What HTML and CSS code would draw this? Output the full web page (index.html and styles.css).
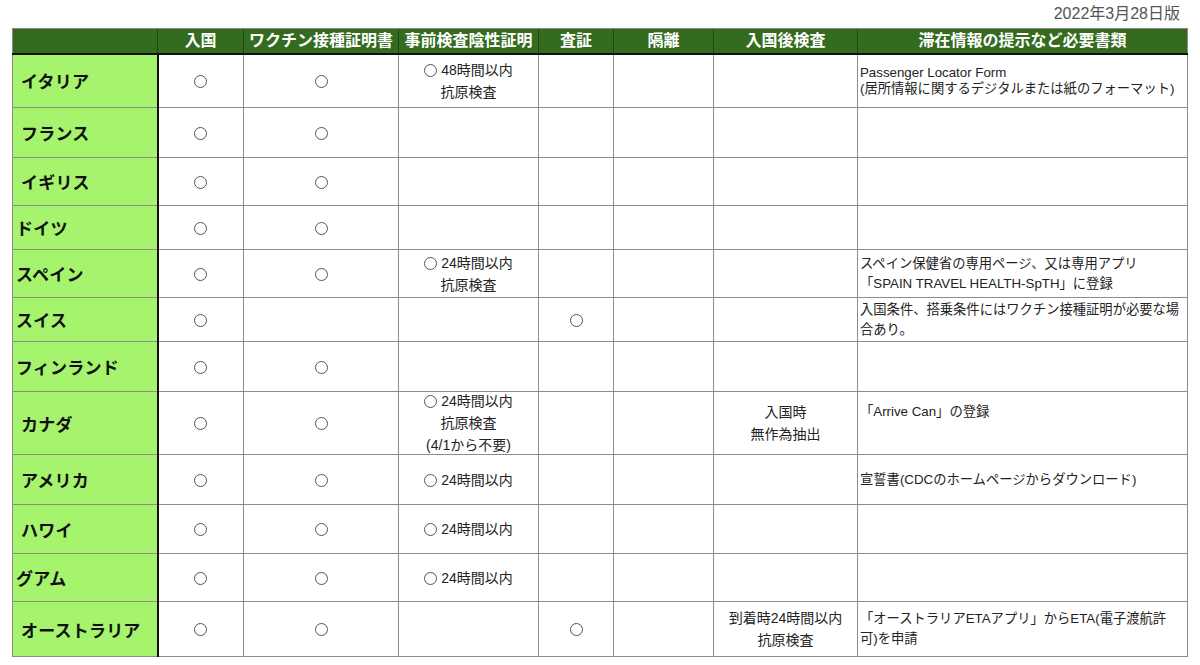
FILE: index.html
```html
<!DOCTYPE html>
<html lang="ja">
<head>
<meta charset="utf-8">
<title>入国条件一覧</title>
<link rel="stylesheet" href="styles.css">
</head>
<body>
<div class="page">
  <div class="date">2022年3月28日版</div>
  <table class="grid">
    <colgroup>
      <col class="c-country"><col class="c-entry"><col class="c-vax"><col class="c-test"><col class="c-visa"><col class="c-quar"><col class="c-post"><col class="c-notes">
    </colgroup>
    <thead>
      <tr class="head">
        <th></th><th>入国</th><th>ワクチン接種証明書</th><th>事前検査陰性証明</th><th>査証</th><th>隔離</th><th>入国後検査</th><th>滞在情報の提示など必要書類</th>
      </tr>
    </thead>
    <tbody>
      <tr class="h54">
        <th class="country">イタリア</th>
        <td><span class="mark"></span></td>
        <td><span class="mark"></span></td>
        <td><span class="mark"></span> 48時間以内<br>抗原検査</td>
        <td></td><td></td><td></td>
        <td class="notes tight">Passenger Locator Form<br>(居所情報に関するデジタルまたは紙のフォーマット)</td>
      </tr>
      <tr class="h50">
        <th class="country">フランス</th>
        <td><span class="mark"></span></td>
        <td><span class="mark"></span></td>
        <td></td><td></td><td></td><td></td><td class="notes"></td>
      </tr>
      <tr class="h48">
        <th class="country">イギリス</th>
        <td><span class="mark"></span></td>
        <td><span class="mark"></span></td>
        <td></td><td></td><td></td><td></td><td class="notes"></td>
      </tr>
      <tr class="h44">
        <th class="country near">ドイツ</th>
        <td><span class="mark"></span></td>
        <td><span class="mark"></span></td>
        <td></td><td></td><td></td><td></td><td class="notes"></td>
      </tr>
      <tr class="h48">
        <th class="country near">スペイン</th>
        <td><span class="mark"></span></td>
        <td><span class="mark"></span></td>
        <td><span class="mark"></span> 24時間以内<br>抗原検査</td>
        <td></td><td></td><td></td>
        <td class="notes">スペイン保健省の専用ページ、又は専用アプリ<br>「SPAIN TRAVEL HEALTH-SpTH」に登録</td>
      </tr>
      <tr class="h44">
        <th class="country near">スイス</th>
        <td><span class="mark"></span></td>
        <td></td>
        <td></td>
        <td><span class="mark"></span></td>
        <td></td><td></td>
        <td class="notes">入国条件、搭乗条件にはワクチン接種証明が必要な場合あり。</td>
      </tr>
      <tr class="h50">
        <th class="country near">フィンランド</th>
        <td><span class="mark"></span></td>
        <td><span class="mark"></span></td>
        <td></td><td></td><td></td><td></td><td class="notes"></td>
      </tr>
      <tr class="h63">
        <th class="country">カナダ</th>
        <td><span class="mark"></span></td>
        <td><span class="mark"></span></td>
        <td><span class="stack"><span class="mark"></span> 24時間以内<br>抗原検査<br>(4/1から不要)</span></td>
        <td></td><td></td>
        <td>入国時<br>無作為抽出</td>
        <td class="notes top">「Arrive Can」の登録</td>
      </tr>
      <tr class="h50">
        <th class="country">アメリカ</th>
        <td><span class="mark"></span></td>
        <td><span class="mark"></span></td>
        <td><span class="mark"></span> 24時間以内</td>
        <td></td><td></td><td></td>
        <td class="notes">宣誓書(CDCのホームページからダウンロード)</td>
      </tr>
      <tr class="h49">
        <th class="country">ハワイ</th>
        <td><span class="mark"></span></td>
        <td><span class="mark"></span></td>
        <td><span class="mark"></span> 24時間以内</td>
        <td></td><td></td><td></td><td class="notes"></td>
      </tr>
      <tr class="h48">
        <th class="country near">グアム</th>
        <td><span class="mark"></span></td>
        <td><span class="mark"></span></td>
        <td><span class="mark"></span> 24時間以内</td>
        <td></td><td></td><td></td><td class="notes"></td>
      </tr>
      <tr class="h55">
        <th class="country">オーストラリア</th>
        <td><span class="mark"></span></td>
        <td><span class="mark"></span></td>
        <td></td>
        <td><span class="mark"></span></td>
        <td></td>
        <td>到着時24時間以内<br>抗原検査</td>
        <td class="notes">「オーストラリアETAアプリ」からETA(電子渡航許<br>可)を申請</td>
      </tr>
    </tbody>
  </table>
</div>
</body>
</html>
```

FILE: styles.css
```css
* { box-sizing: border-box; }

html, body {
  margin: 0;
  padding: 0;
  background: #ffffff;
}

body {
  font-family: "Liberation Sans", "Noto Sans CJK JP", sans-serif;
  color: #222;
}

.page {
  width: 1200px;
  padding: 0 13px 0 12px;
}

.date {
  height: 28px;
  line-height: 28px;
  font-size: 16px;
  color: #555;
  text-align: right;
  padding-right: 7px;
}

.grid {
  width: 1175px;
  table-layout: fixed;
  border-collapse: collapse;
  border: 1px solid #8a8a8a;
}

.c-country { width: 145px; }
.c-entry { width: 86px; }
.c-vax { width: 155px; }
.c-test { width: 140px; }
.c-visa { width: 75px; }
.c-quar { width: 100px; }
.c-post { width: 144px; }
.c-notes { width: 330px; }

.head {
  height: 25px;
  background: #336b1f;
}

.head th {
  padding: 0;
  font-size: 16px;
  line-height: 22px;
  font-weight: bold;
  color: #ffffff;
  text-align: center;
  white-space: nowrap;
  border-left: 1px solid #1e4812;
  border-top: 1px solid #8a8a8a;
  border-bottom: 2px solid #111;
}

.head th:first-child {
  border-left: 1px solid #8a8a8a;
}

.h44 { height: 44px; }
.h48 { height: 48px; }
.h49 { height: 49px; }
.h50 { height: 50px; }
.h54 { height: 54px; }
.h55 { height: 55px; }
.h63 { height: 63px; }

td, .country {
  padding: 0;
  border: 1px solid #8c8c8c;
  vertical-align: middle;
}

td {
  font-size: 14px;
  line-height: 22px;
  text-align: center;
  color: #222;
}

.stack {
  display: block;
  margin: -3px 0 -3px;
}

.country {
  background: #a6f46e;
  border-right: 2px solid #111;
  text-align: left;
  padding-left: 8px;
  font-size: 17px;
  font-weight: bold;
  color: #111;
  letter-spacing: 0.2px;
}

.country.near {
  padding-left: 3px;
}

.mark {
  display: inline-block;
  width: 13px;
  height: 13px;
  border: 1px solid #555;
  border-radius: 50%;
  vertical-align: -2px;
}

.notes {
  text-align: left;
  font-size: 13.3px;
  line-height: 20px;
  padding: 0 2px 0 2px;
}

.notes.tight {
  line-height: 16px;
}

.notes.top {
  vertical-align: top;
  padding-top: 10px;
}
```
